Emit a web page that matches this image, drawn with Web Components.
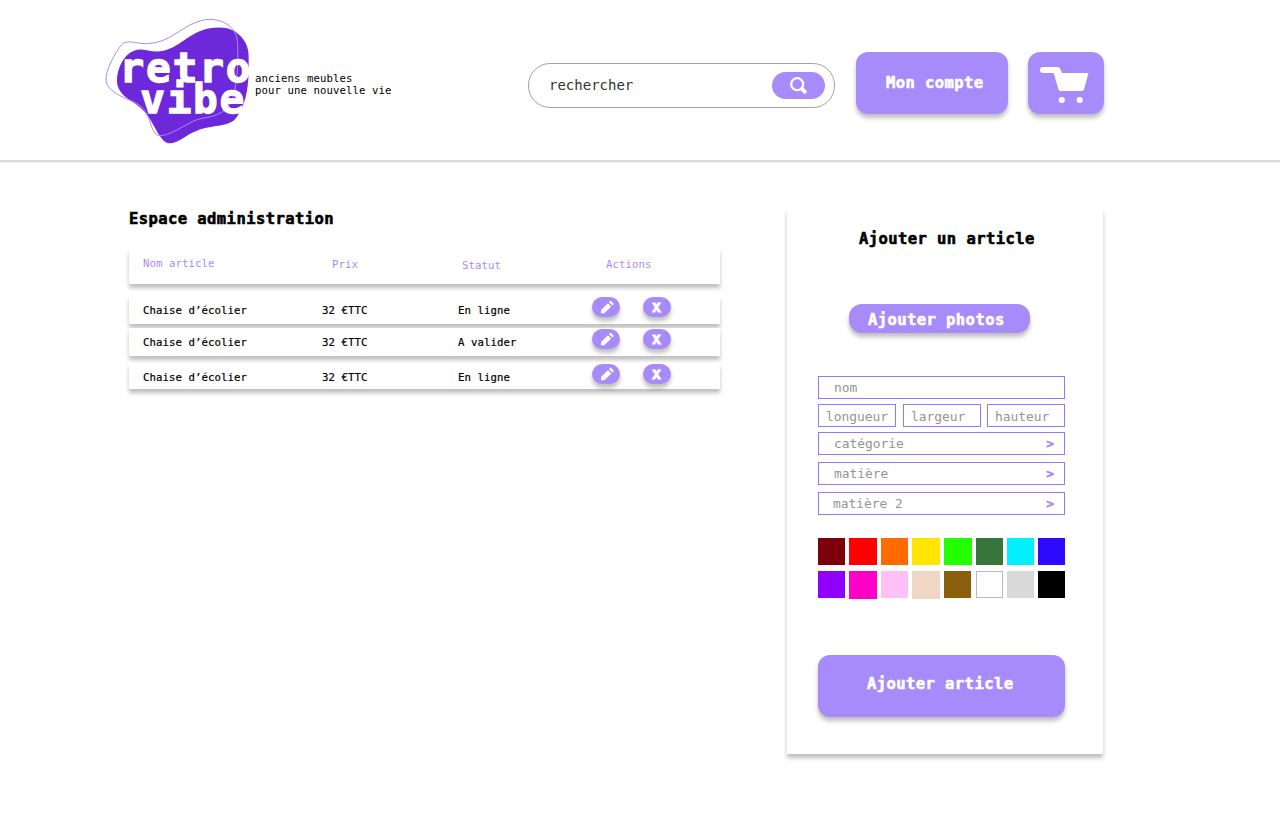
<!DOCTYPE html>
<html lang="fr">
<head>
<meta charset="utf-8">
<title>retro vibe</title>
<style>
html,body{margin:0;height:100%;background:#fff;color:#000;font-family:"DejaVu Sans Mono","Liberation Mono",monospace}
body{overflow:hidden}
</style>
</head>
<body>
<rv-app></rv-app>
<script>
const define = (name, css, html) => {
  const t = document.createElement('template');
  t.innerHTML = `<style>:host{display:block;box-sizing:border-box}*{box-sizing:border-box}${css}</style>${html}`;
  customElements.define(name, class extends HTMLElement {
    constructor() {
      super();
      this.attachShadow({mode: 'open'}).append(t.content.cloneNode(true));
    }
  });
};

define('rv-logo', `:host{width:170px;height:145px}svg{display:block}
text{font:bold 41px "DejaVu Sans Mono",monospace;fill:#fff;stroke:#fff;stroke-width:1.3px}`, `
<svg width="170" height="145" viewBox="0 0 170 145">
<g transform="scale(.33333)">
<path fill="#6d28d9" d="M66 212C66 175 88 125 128 119C152 117 168 127 195 124C254 117 280 66 345 55C390 48 418 57 440 82C460 105 462 128 461 156C462 215 458 282 420 328C397 352 350 344 306 362C270 375 250 400 224 400C197 398 184 354 158 317C142 295 126 283 103 269C76 251 66 232 66 212Z"/>
<path fill="none" stroke="#a78bfa" stroke-width="3" d="M33 211C31 180 62 125 80 104C96 87 121 101 154 101C229 101 259 42 331 29C378 23 424 50 427 92C431 137 428 213 414 263C399 306 364 319 321 325C284 331 242 371 199 377C172 380 169 339 154 309C137 279 115 277 83 261C58 249 35 233 33 211Z"/>
</g>
<text x="24.5" y="72.3" textLength="131">retro</text>
<text x="45.2" y="103.3" textLength="104">vibe</text>
</svg>`);

define('rv-search', `:host{width:307px;height:45px}
.box{display:flex;align-items:center;justify-content:space-between;height:45px;border:1px solid #a3a3a3;border-radius:22px;padding:0 9px 0 20px}
span{font-size:14px;line-height:20px;color:#333;margin-top:-2px}
.go{display:flex;align-items:center;justify-content:center;width:53px;height:27px;border-radius:14px;background:#a78bfa}`, `
<div class="box"><span><slot></slot></span><div class="go">
<svg width="18" height="18" viewBox="0 0 18 18" fill="none" stroke="#fff"><circle cx="7.2" cy="7.2" r="6" stroke-width="2.3"/><path d="M12 12l2.7 2.7" stroke-width="4" stroke-linecap="round"/></svg>
</div></div>`);

define('rv-button', `:host{display:flex;align-items:flex-start;background:#a78bfa;color:#fff;border-radius:12px;box-shadow:0 4px 4px rgba(0,0,0,.25);font-weight:bold;font-size:15.5px;line-height:20px;letter-spacing:.43px;white-space:nowrap;-webkit-text-stroke:.6px #fff}`, `<slot></slot>`);

define('rv-cart', `svg{display:block}`, `
<svg width="50" height="38" viewBox="0 0 50 38" fill="#fff"><path d="M3 1H17.5Q19.5 1 20.3 3L22 7H48.5L44 23.5Q43.6 25 42 25H20.5Q19 25 18.5 23.5L13.6 7H3A3 3 0 0 1 3 1Z"/><circle cx="21.7" cy="34" r="3.1"/><circle cx="39.7" cy="34" r="3.1"/></svg>`);

define('rv-header', `:host{height:160px;background:#fff;box-shadow:0 2px 0 #ddd,0 3px 0 #f1f1f1}
.bar{display:flex;align-items:flex-start;height:160px;padding-left:95px}
rv-logo{margin:10px -10px 0 0;flex:none}
p{margin:73px 0 0;width:273px;flex:none;font-size:10.67px;line-height:12px;letter-spacing:.08px}
rv-search{margin-top:63px;flex:none}
.account{width:152px;height:62px;margin:52px 0 0 21px;padding:21px 0 0 30px}
.cart{width:76px;height:62px;margin:52px 0 0 20px;padding:14px 0 0 12px}`, `
<div class="bar"><rv-logo></rv-logo><p>anciens meubles<br>pour une nouvelle vie</p>
<rv-search>rechercher</rv-search>
<rv-button class="account">Mon compte</rv-button>
<rv-button class="cart"><rv-cart></rv-cart></rv-button></div>`);

define('rv-action', `:host{width:28px;height:20px;border-radius:10px;background:#a78bfa;box-shadow:0 4px 4px rgba(0,0,0,.25)}
svg,b{display:none}:host([kind=edit]) .edit{display:block}:host([kind=delete]) b{display:block}
b{color:#fff;font-size:15.5px;line-height:20px;text-align:center;letter-spacing:0;text-indent:-1px;-webkit-text-stroke:.8px #fff}`, `
<svg class="edit" width="28" height="20" fill="#fff"><path d="M9 16.3V12.9L15.9 6.2L19.3 9.4L12.3 16.3ZM17 5.2L18.6 3.6L22 6.9L20.4 8.4Z"/></svg>
<b>x</b>`);

define('rv-row', `:host{display:block;height:28px;background:#fff;box-shadow:0 4px 4px rgba(0,0,0,.25);font-size:10.67px;line-height:12px;letter-spacing:.08px;-webkit-text-stroke:.2px #000}
.grid{display:grid;grid-template-columns:179px 136px 134px 51px 28px;padding-left:14px;align-items:start}
.t{padding-top:9px}rv-action{margin-top:1px}`, `
<div class="grid"><span class="t"><slot name="name"></slot></span><span class="t"><slot name="price"></slot></span><span class="t"><slot name="status"></slot></span><rv-action kind="edit"></rv-action><rv-action kind="delete"></rv-action></div>`);

define('rv-table', `:host{width:591px}
h1{margin:0 0 20px;font-size:15.5px;line-height:20px;letter-spacing:.43px;-webkit-text-stroke:.6px #000}
.head{display:grid;grid-template-columns:189px 130px 144px 1fr;height:35px;padding:9px 0 0 14px;background:#fff;box-shadow:0 4px 4px rgba(0,0,0,.25);color:#a78bfa;font-size:10.67px;line-height:12px;letter-spacing:.08px}
.mid{padding-top:1px}.low{padding-top:2px}
.rows{display:grid;grid-template-rows:28px 28px 29px;row-gap:4px;margin-top:12px}
rv-row.last{margin-top:3px;height:26px}`, `
<h1>Espace administration</h1>
<div class="head"><span>Nom article</span><span class="mid">Prix</span><span class="low">Statut</span><span class="mid">Actions</span></div>
<div class="rows">
<rv-row><span slot="name">Chaise d’écolier</span><span slot="price">32 €TTC</span><span slot="status">En ligne</span></rv-row>
<rv-row><span slot="name">Chaise d’écolier</span><span slot="price">32 €TTC</span><span slot="status">A valider</span></rv-row>
<rv-row class="last"><span slot="name">Chaise d’écolier</span><span slot="price">32 €TTC</span><span slot="status">En ligne</span></rv-row>
</div>`);

define('rv-field', `:host{height:23px;border:1px solid #937af5;color:#949494;font-size:12.9px;line-height:20px;padding:1px 10px 0 15px;background:#fff}
.in{display:flex;justify-content:space-between}
i{display:none;font-style:normal;font-weight:bold;color:#a78bfa;-webkit-text-stroke:.5px #a78bfa}
:host([select]) i{display:block}:host([small]){padding:2px 0 0 7px}`, `
<div class="in"><span><slot></slot></span><i>&gt;</i></div>`);

define('rv-swatches', `.g{display:grid;grid-template-columns:31px 32px 31px 32px 32px 31px 31px 27px;grid-auto-rows:27px;row-gap:6px}
.g i{width:27px;height:27px}.g .w{width:28px}.g .b{width:28px;height:28px}`, `
<div class="g">
<i style="background:#7b0009"></i><i class="w" style="background:#f00"></i><i style="background:#ff6b00"></i><i class="w" style="background:#ffe500"></i><i class="w" style="background:#24ff00"></i><i style="background:#38753a"></i><i style="background:#00f0ff"></i><i style="background:#2e0bff"></i>
<i style="background:#8f00ff"></i><i class="b" style="background:#ff00c7"></i><i style="background:#ffc0f5"></i><i class="b" style="background:#f0d6c5"></i><i style="background:#895f0c"></i><i style="background:#fff;border:1px solid #b9b9b9"></i><i style="background:#d9d9d9"></i><i style="background:#000"></i>
</div>`);

define('rv-form', `:host{width:316px;height:545px;background:#fff;box-shadow:0 4px 4px rgba(0,0,0,.25);padding:20px 38px 0 31px}
h2{margin:0 0 0 41px;font-size:15.5px;line-height:20px;letter-spacing:.43px;white-space:nowrap;-webkit-text-stroke:.6px #000}
.photos{width:181px;height:29px;margin:55px 0 43px 31px;padding:6px 0 0 19px;border-radius:13px}
.dims{display:grid;grid-template-columns:78px 78px 78px;column-gap:7px;margin:5px 0;width:247px}
.dims rv-field:last-child{margin-left:-1px;margin-right:1px}
.next{margin-top:7px}.two{padding-left:14px}
rv-swatches{margin:23px 0 57px}
.submit{width:247px;height:62px;padding:19px 0 0 49px}`, `
<h2>Ajouter un article</h2>
<rv-button class="photos">Ajouter photos</rv-button>
<rv-field>nom</rv-field>
<div class="dims"><rv-field small>longueur</rv-field><rv-field small>largeur</rv-field><rv-field small>hauteur</rv-field></div>
<rv-field select>catégorie</rv-field>
<rv-field select class="next">matière</rv-field>
<rv-field select class="next two">matière 2</rv-field>
<rv-swatches></rv-swatches>
<rv-button class="submit">Ajouter article</rv-button>`);

define('rv-app', `main{display:flex;align-items:flex-start;padding:49px 0 0 129px;gap:67px}`, `
<rv-header></rv-header><main><rv-table></rv-table><rv-form></rv-form></main>`);
</script>
</body>
</html>
